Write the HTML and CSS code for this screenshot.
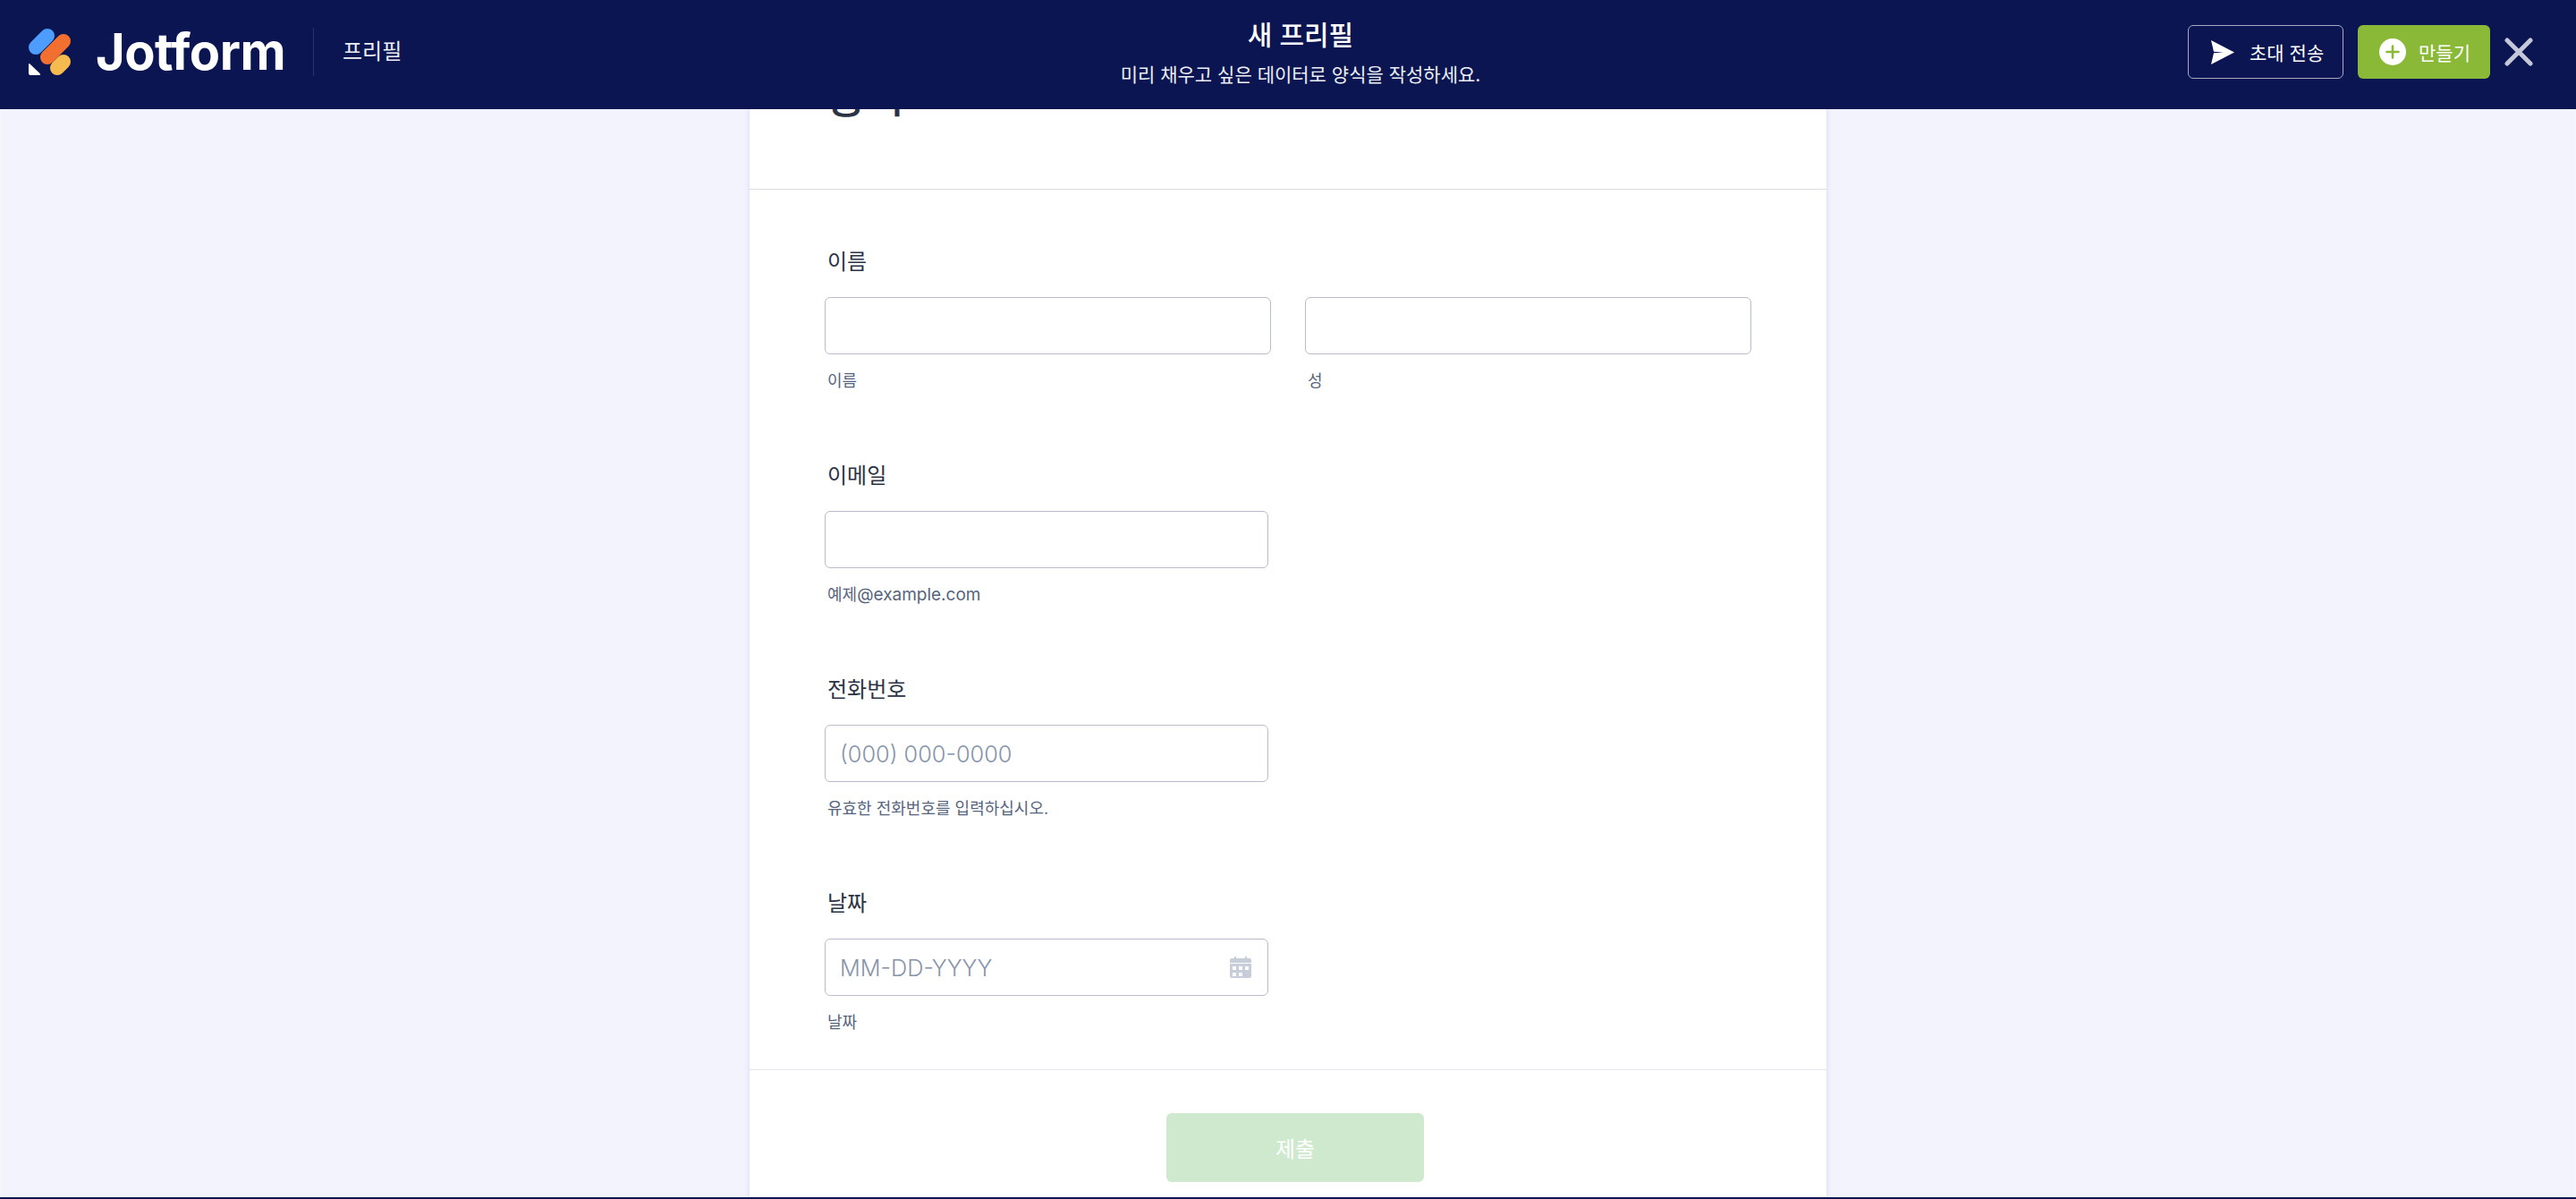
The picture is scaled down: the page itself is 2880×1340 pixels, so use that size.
FILE: index.html
```html
<!DOCTYPE html>
<html lang="ko">
<head>
    <meta charset="UTF-8">
    <meta name="viewport" content="width=device-width, initial-scale=1.0">
    <title>새 프리필 - Jotform</title>
    <link rel="stylesheet" href="styles.css">
</head>
<body>
    <div class="app">
        <header class="topbar">
            <div class="topbar-left">
                <svg class="logo-mark" viewBox="0 0 47 52" aria-hidden="true">
                    <path d="M8 21 21 8" stroke="#4c9dff" stroke-width="16" stroke-linecap="round"/>
                    <path d="M21 32 39 14" stroke="#f2702f" stroke-width="16" stroke-linecap="round"/>
                    <path d="M32 44 39 37" stroke="#f5bb4e" stroke-width="16" stroke-linecap="round"/>
                    <path d="M0 40.500Q0 38 2 40L12.500 50Q14 52 12 52H2Q0 52 0 50Z" fill="#fff"/>
                </svg>
                <span class="logo-word">Jotform</span>
                <span class="logo-divider"></span>
                <span class="page-name">프리필</span>
            </div>
            <div class="topbar-center">
                <h1>새 프리필</h1>
                <p>미리 채우고 싶은 데이터로 양식을 작성하세요.</p>
            </div>
            <div class="topbar-right">
                <button class="btn btn-invite">
                    <svg class="icon-send" viewBox="0 0 26 27" aria-hidden="true">
                        <path d="M0 0 26 13.500 0 27 3 14.300 14 13.500 3 12.700Z" fill="#fff"/>
                    </svg>
                    초대 전송
                </button>
                <button class="btn btn-create">
                    <svg class="icon-plus" viewBox="0 0 30 30" aria-hidden="true">
                        <circle cx="15" cy="15" r="15" fill="#fff"/>
                        <path d="M15 8.500v13M8.500 15h13" stroke="#8ab837" stroke-width="2.600" stroke-linecap="round"/>
                    </svg>
                    만들기
                </button>
                <button class="btn-close" aria-label="닫기">
                    <svg viewBox="0 0 32 32" aria-hidden="true">
                        <path d="M3 3 29 29M29 3 3 29" stroke="#c5c8d8" stroke-width="5" stroke-linecap="round"/>
                    </svg>
                </button>
            </div>
        </header>

        <main class="form-viewport">
            <form class="form-card">
                <div class="form-head">
                    <h2>등록</h2>
                </div>

                <div class="form-fields">
                    <div class="field">
                        <label class="field-label">이름</label>
                        <div class="name-row">
                            <div>
                                <input class="field-input" type="text">
                                <div class="field-hint">이름</div>
                            </div>
                            <div>
                                <input class="field-input" type="text">
                                <div class="field-hint">성</div>
                            </div>
                        </div>
                    </div>

                    <div class="field field-single">
                        <label class="field-label">이메일</label>
                        <input class="field-input" type="text">
                        <div class="field-hint">예제<span class="hint-latin">@example.com</span></div>
                    </div>

                    <div class="field field-single">
                        <label class="field-label">전화번호</label>
                        <input class="field-input" type="text" placeholder="(000) 000-0000">
                        <div class="field-hint">유효한 전화번호를 입력하십시오.</div>
                    </div>

                    <div class="field field-single">
                        <label class="field-label">날짜</label>
                        <div class="date-input">
                            <input type="text" placeholder="MM-DD-YYYY">
                            <svg class="icon-calendar" viewBox="0 0 24 24" aria-hidden="true">
                                <path d="M5 0h2v2h10V0h2v2h3a2 2 0 0 1 2 2v3H0V4a2 2 0 0 1 2-2h3Z" fill="#c8cdda"/>
                                <path fill-rule="evenodd" d="M0 8h24v14a2 2 0 0 1-2 2H2a2 2 0 0 1-2-2ZM3 11v4h4v-4ZM10 11v4h4v-4ZM17 11v4h4v-4ZM3 18v4h4v-4ZM10 18v4h4v-4Z" fill="#c8cdda"/>
                            </svg>
                        </div>
                        <div class="field-hint">날짜</div>
                    </div>
                </div>

                <div class="form-footer">
                    <button class="btn-submit" type="button">제출</button>
                </div>
            </form>
        </main>

        <div class="bottom-line"></div>
    </div>
</body>
</html>
```

FILE: styles.css
```css
* {
    margin: 0;
    padding: 0;
    box-sizing: border-box;
}

body {
    font-family: Inter, "Noto Sans CJK KR", sans-serif;
    background: #f3f3fe;
    color: #2c3345;
}

.app {
    position: relative;
    height: 1340px;
    display: flex;
    flex-direction: column;
    overflow: hidden;
}

/* thin frame on the window edges */
.app::after {
    content: "";
    position: absolute;
    inset: 0;
    border-left: 2px solid rgba(255, 255, 255, 0.2);
    border-right: 2px solid rgba(255, 255, 255, 0.2);
    pointer-events: none;
}

.topbar {
    position: relative;
    z-index: 2;
    flex: none;
    height: 122px;
    background: #0a1551;
    color: #fff;
    display: flex;
    align-items: center;
    padding: 0 48px 6px 32px;
}

.topbar-left,
.topbar-right {
    flex: 1;
    display: flex;
    align-items: center;
}

.topbar-right {
    justify-content: flex-end;
    gap: 16px;
}

.logo-mark {
    width: 47px;
    height: 52px;
    overflow: visible;
}

.logo-word {
    margin-left: 28px;
    font-size: 56px;
    font-weight: 700;
    letter-spacing: -0.5px;
    line-height: 60px;
}

.logo-divider {
    width: 1px;
    height: 54px;
    margin-left: 31px;
    background: #2b3468;
}

.page-name {
    margin-left: 32px;
    font-size: 24px;
    line-height: 30px;
    color: #eceef6;
}

.topbar-center {
    flex: none;
    padding: 3px 0 0 44px;
    text-align: center;
}

.topbar-center h1 {
    font-size: 30px;
    font-weight: 500;
    line-height: 38px;
}

.topbar-center p {
    margin-top: 11px;
    font-size: 21px;
    line-height: 30px;
    color: #eceef6;
}

.btn {
    height: 60px;
    display: flex;
    align-items: center;
    border-radius: 6px;
    color: #fff;
    font-family: inherit;
    font-size: 21px;
}

.btn-invite {
    width: 174px;
    padding-left: 25px;
    background: transparent;
    border: 1px solid #a7aac2;
    gap: 17px;
}

.icon-send {
    width: 26px;
    height: 27px;
}

.btn-create {
    width: 148px;
    padding-left: 24px;
    background: #8ab837;
    border: none;
    gap: 14px;
}

.icon-plus {
    width: 30px;
    height: 30px;
}

.btn-close {
    width: 32px;
    height: 32px;
    background: none;
    border: none;
}

.btn-close svg {
    display: block;
}

.form-viewport {
    flex: 1;
    min-height: 0;
    overflow: hidden;
}

.form-card {
    width: 1204px;
    margin: -70px auto 0;
    background: #fff;
    box-shadow: 0 0 6px rgba(80, 70, 150, 0.16);
}

.form-head {
    height: 160px;
    padding: 27px 0 0 86px;
    border-bottom: 1px solid #dcdce4;
}

.form-head h2 {
    font-size: 48px;
    font-weight: 500;
    line-height: 60px;
}

.form-fields {
    padding: 65px 84px 40px;
}

.field + .field {
    margin-top: 78px;
}

.field-label {
    display: block;
    height: 30px;
    margin-bottom: 25px;
    padding-left: 3px;
    font-size: 24px;
    line-height: 32px;
}

.field-input,
.date-input {
    width: 100%;
    height: 64px;
    background: #fff;
    border: 1px solid #b8bdc9;
    border-radius: 6px;
}

.field-input {
    display: block;
    padding: 0 16px;
    font-family: inherit;
    font-size: 25.300px;
    font-weight: 300;
}

.name-row {
    display: grid;
    grid-template-columns: 499px 499px;
    gap: 38px;
}

.field-single .field-input,
.field-single .date-input {
    width: 496px;
}

.date-input {
    display: flex;
    align-items: center;
    padding: 0 18px 0 16px;
}

.date-input input {
    flex: 1;
    min-width: 0;
    border: none;
    outline: none;
    font-family: inherit;
    font-size: 25.300px;
    font-weight: 300;
}

input::placeholder {
    color: #8894ab;
    opacity: 1;
}

.icon-calendar {
    flex: none;
    width: 24px;
    height: 24px;
}

.field-hint {
    margin-top: 18px;
    padding-left: 3px;
    font-size: 18px;
    line-height: 24px;
    color: #57647e;
}

.hint-latin {
    font-size: 19px;
}

.form-footer {
    display: flex;
    justify-content: center;
    height: 145px;
    padding: 48px 0 0 16px;
    border-top: 1px solid #e6e6f0;
}

.btn-submit {
    width: 288px;
    height: 77px;
    background: #cfe9cf;
    border: none;
    border-radius: 6px;
    color: #fff;
    font-family: inherit;
    font-size: 24px;
}

.bottom-line {
    position: relative;
    z-index: 2;
    flex: none;
    height: 2px;
    background: #0a1551;
}
```
